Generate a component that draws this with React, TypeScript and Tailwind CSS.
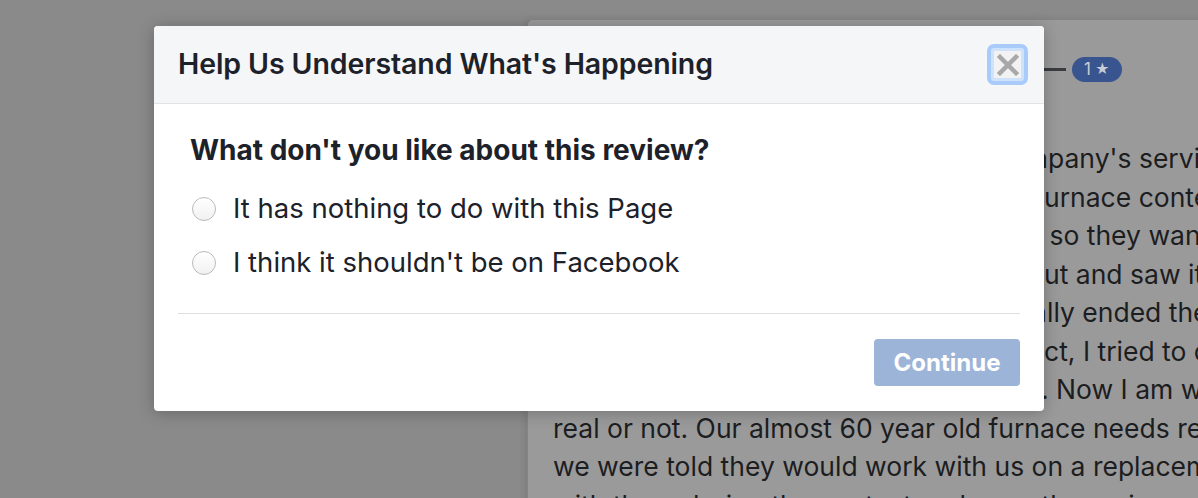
import { useState } from "react";

const reviewLines = [
  { w: "w-[495px]", hidden: "I would not recommend this com", shown: "pany's service to anyone at all" },
  { w: "w-[491px]", hidden: "We entered their spring f", shown: "urnace contest they advertised" },
  { w: "w-[489px]", hidden: "our old unit was failing", shown: "\u00a0so they wanted our story" },
  { w: "w-[491px]", hidden: "When winners came o", shown: "ut and saw it, right away" },
  { w: "w-[494px]", hidden: "Then they fina", shown: "lly ended the contest early" },
  { w: "w-[491px]", hidden: "With no conta", shown: "ct, I tried to call them" },
  { w: "w-[488px]", hidden: "no reply came", shown: ". Now I am wondering if it was" },
];

const options = ["It has nothing to do with this Page", "I think it shouldn't be on Facebook"];

export default function App() {
  const [choice, setChoice] = useState<number | null>(null);

  return (
    <div className="relative h-[498px] w-full overflow-hidden bg-[#8a8a8b] pt-[19px] pl-[527px] font-['Inter','Liberation_Sans',sans-serif]">
      {/* review card behind the dialog */}
      <div className="h-[520px] w-[760px] rounded-tl-[6px] border-l border-t border-[#848485] bg-[#9a9a9b] shadow-[-3px_0_6px_rgba(0,0,0,0.08)]">
        <div className="flex h-[61px] items-end pl-[516px]">
          <div className="flex h-[24px] items-center gap-[6px]">
            <span className="h-[3px] w-[22px] bg-[#3a3c40]" />
            <span className="flex h-[25px] items-center gap-[4px] rounded-full bg-[#38558f] px-[12px] text-[17px] leading-none text-[#c9cdd6]">
              1<span className="text-[14px]">★</span>
            </span>
          </div>
        </div>
        <div className="mt-[58px] pl-[25px] text-[26.5px] leading-[38.5px] text-[#1c1d20]">
          {reviewLines.map((line) => (
            <div key={line.shown} className="flex whitespace-nowrap">
              <span className={`${line.w} flex shrink-0 justify-end overflow-hidden`}>
                <span>{line.hidden}</span>
              </span>
              <span>{line.shown}</span>
            </div>
          ))}
          <div className="whitespace-nowrap">real or not. Our almost 60 year old furnace needs replacing and</div>
          <div className="whitespace-nowrap">we were told they would work with us on a replacement</div>
          <div className="whitespace-nowrap">with them during the contest and seen the reviews</div>
        </div>
      </div>

      {/* dialog */}
      <div className="absolute left-[154px] top-[26px] w-[890px] overflow-hidden rounded-[4px] bg-white shadow-[0_2px_16px_rgba(0,0,0,0.25)]">
        <div className="flex h-[78px] items-center justify-between border-b border-[#e2e3e5] bg-[#f5f6f7] pl-[24px] pr-[16px]">
          <h2 className="text-[28.5px] font-semibold tracking-[-0.1px] text-[#1d2129]">Help Us Understand What's Happening</h2>
          <button className="flex h-[41px] w-[41px] items-center justify-center rounded-[7px] bg-[#a9cbfa] p-[4px]">
            <span className="flex h-full w-full items-center justify-center rounded-[3px] border-[3px] border-[#cfe2fc] bg-[#f2f2f3]">
              <svg width="22" height="22" viewBox="0 0 22 22">
                <path d="M3 3 L19 19 M19 3 L3 19" stroke="#a8a8aa" strokeWidth="4.5" strokeLinecap="square" />
              </svg>
            </span>
          </button>
        </div>
        <div className="px-[24px]">
          <div className="border-b border-[#dddfe2] px-[12px] pb-[31px] pt-[29px]">
            <p className="text-[28px] font-bold leading-[34px] text-[#1d2129]">What don't you like about this review?</p>
            <div className="mt-[23px] flex flex-col gap-[16px]">
              {options.map((label, i) => (
                <label key={label} className="flex h-[38px] cursor-pointer items-center gap-[17px]">
                  <span
                    onClick={() => setChoice(i)}
                    className="ml-[2px] h-[24px] w-[24px] rounded-full border border-[#b9babc] bg-gradient-to-b from-[#ffffff] to-[#f1f1f2] shadow-[inset_0_1px_1px_rgba(255,255,255,0.9)]"
                  >
                    {choice === i ? <span className="m-[6px] block h-[10px] w-[10px] rounded-full bg-[#4267b2]" /> : null}
                  </span>
                  <span className="text-[27.5px] text-[#1d2129]">{label}</span>
                </label>
              ))}
            </div>
          </div>
          <div className="flex justify-end pb-[25px] pt-[25px]">
            <button disabled className="h-[47px] w-[146px] rounded-[4px] bg-[#9cb4d8] text-[24px] font-bold text-white">
              Continue
            </button>
          </div>
        </div>
      </div>
    </div>
  );
}
